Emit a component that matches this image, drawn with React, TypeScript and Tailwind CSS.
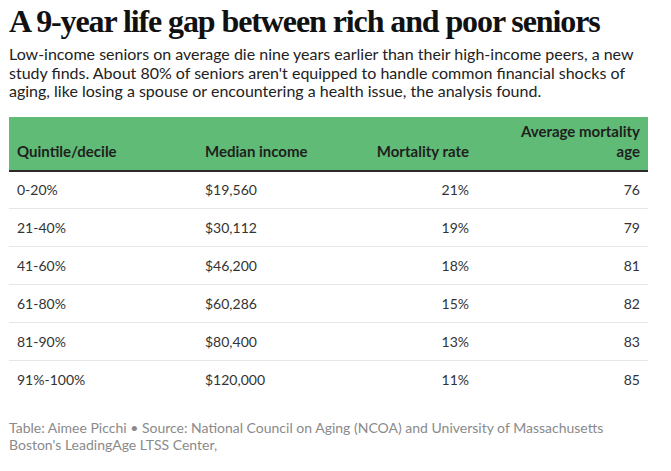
const rows = [
  ["0-20%", "$19,560", "21%", "76"],
  ["21-40%", "$30,112", "19%", "79"],
  ["41-60%", "$46,200", "18%", "81"],
  ["61-80%", "$60,286", "15%", "82"],
  ["81-90%", "$80,400", "13%", "83"],
  ["91%-100%", "$120,000", "11%", "85"],
];

export default function App() {
  return (
    <div className="min-h-screen bg-white px-[9px] pt-[3px] font-['Lato','Liberation_Sans',sans-serif] text-[#222]">
      <h1 className="font-['Liberation_Serif',serif] text-[32px] font-bold leading-[36px] tracking-[-1.1px] text-[#111]">
        A 9-year life gap between rich and poor seniors
      </h1>
      <p className="mt-[6px] w-[645px] text-[16px] leading-[18.5px] text-[#222]">
        Low-income seniors on average die nine years earlier than their high-income peers, a new
        study finds. About 80% of seniors aren't equipped to handle common financial shocks of
        aging, like losing a spouse or encountering a health issue, the analysis found.
      </p>

      <table className="mt-[16px] w-[639px] table-fixed border-collapse text-[14px]">
        <colgroup>
          <col className="w-[188px]" />
          <col className="w-[150px]" />
          <col className="w-[130px]" />
          <col className="w-[171px]" />
        </colgroup>
        <thead>
          <tr className="h-[54px] border-b-[2px] border-[#2b2b2b] bg-[#5fbb75] text-[15px] font-bold leading-[20px] text-[#1f1f1f]">
            <th className="px-2 pb-[9px] text-left align-bottom">Quintile/decile</th>
            <th className="px-2 pb-[9px] text-left align-bottom">Median income</th>
            <th className="px-2 pb-[9px] text-right align-bottom">Mortality rate</th>
            <th className="px-2 pb-[9px] text-right align-bottom">
              Average mortality
              <br />
              age
            </th>
          </tr>
        </thead>
        <tbody className="text-[#333]">
          {rows.map((r, i) => (
            <tr key={r[0]} className={`h-[38px] ${i < rows.length - 1 ? "border-b border-[#e6e6e6]" : ""}`}>
              <td className="px-2 text-left">{r[0]}</td>
              <td className="px-2 text-left">{r[1]}</td>
              <td className="px-2 text-right">{r[2]}</td>
              <td className="px-2 text-right">{r[3]}</td>
            </tr>
          ))}
        </tbody>
      </table>

      <p className="mt-[20px] text-[14px] leading-[17px] text-[#8a8a8a]">
        Table: Aimee Picchi • Source: National Council on Aging (NCOA) and University of Massachusetts
        <br />
        Boston's LeadingAge LTSS Center,
      </p>
    </div>
  );
}
